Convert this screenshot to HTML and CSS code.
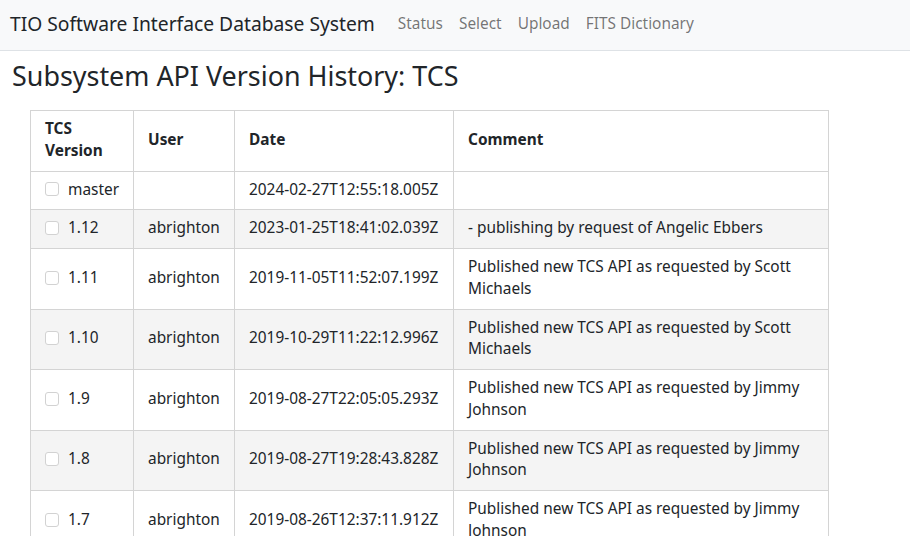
FILE: index.html
```html
<!DOCTYPE html>
<html>
<head>
<meta charset="utf-8">
<link rel="stylesheet" href="styles.css">
</head>
<body>
<nav class="navbar">
  <span class="brand">TIO Software Interface Database System</span>
  <ul class="nav">
    <li><a href="#">Status</a></li>
    <li><a href="#">Select</a></li>
    <li><a href="#">Upload</a></li>
    <li><a href="#">FITS Dictionary</a></li>
  </ul>
</nav>
<main class="page">
  <h2 class="title">Subsystem API Version History: TCS</h2>
  <table class="history">
    <colgroup>
      <col class="c-ver"><col class="c-user"><col class="c-date"><col class="c-comment">
    </colgroup>
    <thead>
      <tr><th>TCS<br>Version</th><th>User</th><th>Date</th><th>Comment</th></tr>
    </thead>
    <tbody>
      <tr><td><label class="ver"><input type="checkbox">master</label></td><td></td><td>2024-02-27T12:55:18.005Z</td><td></td></tr>
      <tr><td><label class="ver"><input type="checkbox">1.12</label></td><td>abrighton</td><td>2023-01-25T18:41:02.039Z</td><td>- publishing by request of Angelic Ebbers</td></tr>
      <tr><td><label class="ver"><input type="checkbox">1.11</label></td><td>abrighton</td><td>2019-11-05T11:52:07.199Z</td><td>Published new TCS API as requested by Scott Michaels</td></tr>
      <tr><td><label class="ver"><input type="checkbox">1.10</label></td><td>abrighton</td><td>2019-10-29T11:22:12.996Z</td><td>Published new TCS API as requested by Scott Michaels</td></tr>
      <tr><td><label class="ver"><input type="checkbox">1.9</label></td><td>abrighton</td><td>2019-08-27T22:05:05.293Z</td><td>Published new TCS API as requested by Jimmy Johnson</td></tr>
      <tr><td><label class="ver"><input type="checkbox">1.8</label></td><td>abrighton</td><td>2019-08-27T19:28:43.828Z</td><td>Published new TCS API as requested by Jimmy Johnson</td></tr>
      <tr><td><label class="ver"><input type="checkbox">1.7</label></td><td>abrighton</td><td>2019-08-26T12:37:11.912Z</td><td>Published new TCS API as requested by Jimmy Johnson</td></tr>
      <tr><td><label class="ver"><input type="checkbox">1.6</label></td><td>abrighton</td><td>2019-08-20T10:12:40.101Z</td><td>Published new TCS API as requested by Jimmy Johnson</td></tr>
    </tbody>
  </table>
</main>
</body>
</html>
```
FILE: styles.css
```css
html, body {
  margin: 0;
  padding: 0;
  background: #fff;
  color: #212529;
  font-family: "Noto Sans", "Open Sans", sans-serif;
  font-size: 15.4px;
}

.navbar {
  display: flex;
  align-items: center;
  height: 51px;
  box-sizing: border-box;
  padding: 0 10px 4px;
  background: #f8f9fa;
  border-bottom: 1px solid #dee2e6;
}

.brand {
  font-size: 19.25px;
  color: #212529;
  margin-right: 15px;
}

.nav {
  display: flex;
  list-style: none;
  margin: 0;
  padding: 0;
}

.nav a {
  display: block;
  padding: 0 8px;
  color: rgba(0, 0, 0, 0.55);
  text-decoration: none;
  font-size: 15.4px;
}

.page {
  padding: 0;
}

.title {
  margin: 9px 0 0 12px;
  font-size: 26.9px;
  font-weight: 400;
  line-height: 1.2;
  height: 50px;
}

.history {
  margin-left: 30px;
  width: 798px;
  table-layout: fixed;
  border-collapse: collapse;
}

.c-ver { width: 103px; }
.c-user { width: 101px; }
.c-date { width: 219px; }
.c-comment { width: 375px; }

.history th,
.history td {
  border: 1px solid #d4d4d4;
  padding: 7px 14px 9px;
  text-align: left;
  vertical-align: middle;
  line-height: 21.75px;
}

.history th {
  font-weight: 700;
}

.history tbody tr:nth-child(even) td {
  background: #f4f4f4;
}

.ver {
  display: flex;
  align-items: center;
}

.ver input {
  appearance: none;
  -webkit-appearance: none;
  width: 14px;
  height: 14px;
  margin: 0 9px 0 0;
  border: 1px solid #d2d2d2;
  border-radius: 3px;
  background: #fff;
  flex: none;
}
```
